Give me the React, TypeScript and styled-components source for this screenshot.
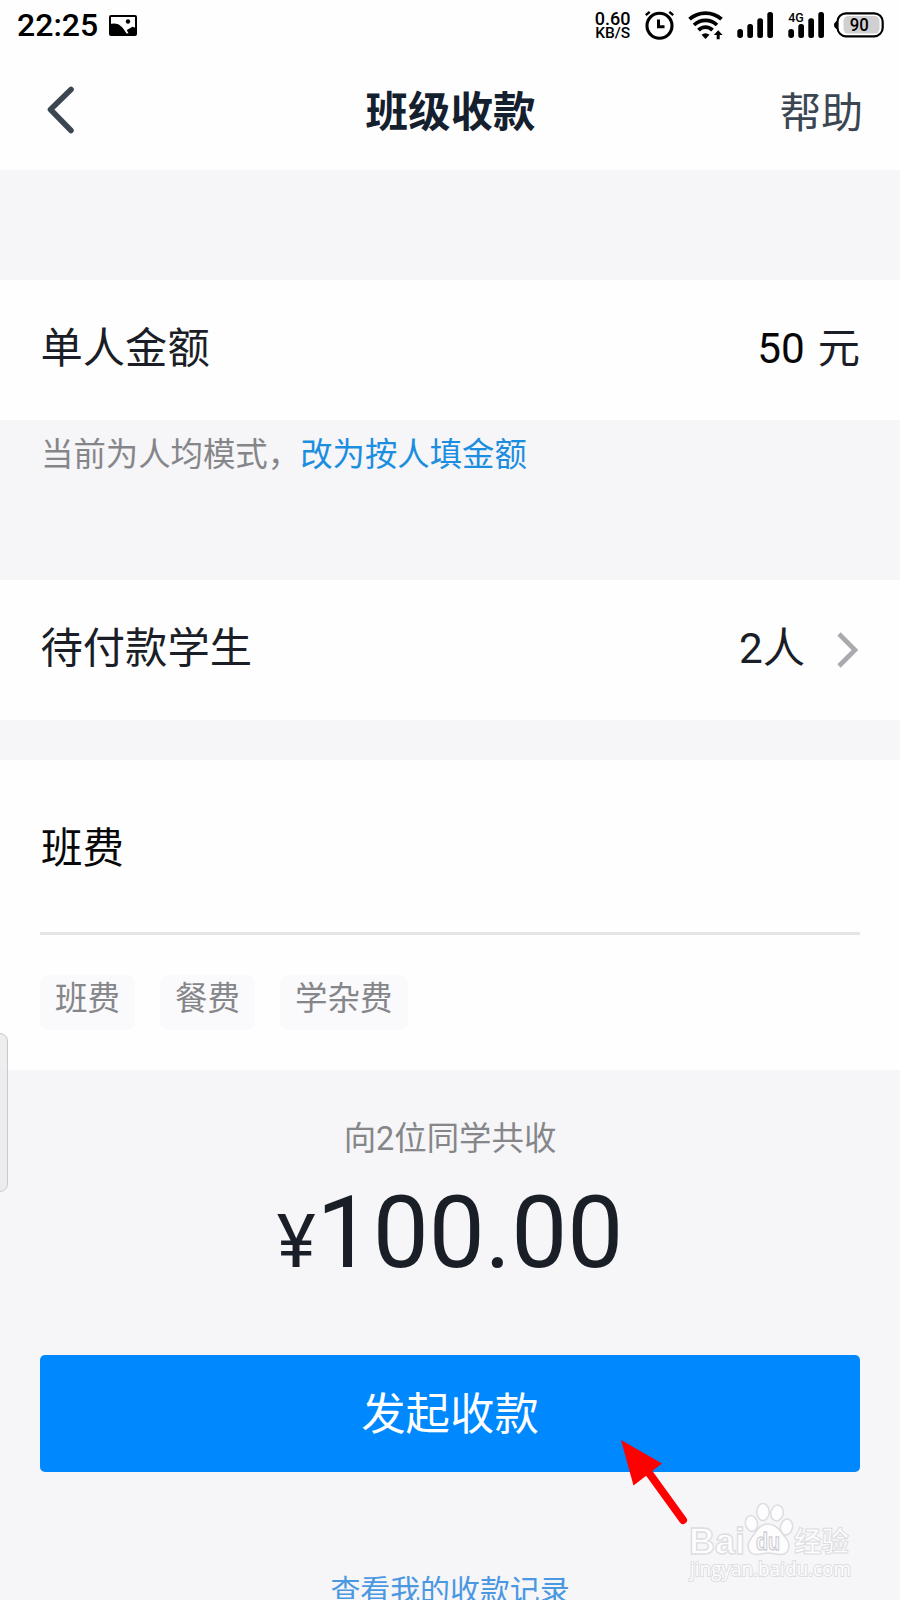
import React from "react";
import styled, { createGlobalStyle } from "styled-components";

const GlobalStyle = createGlobalStyle`
  * { box-sizing: border-box; }
  html, body { margin: 0; padding: 0; overflow: hidden; background: #f6f5f8; }
  body { font-family: Roboto, "Noto Sans CJK SC", sans-serif; }
  svg { display: block; flex: none; overflow: visible; }
`;

const Screen = styled.div`
  position: relative;
  display: flex;
  flex-direction: column;
  width: 900px;
  height: 1600px;
  overflow: hidden;
  background: #f6f5f8;
  color: #1b1e26;
`;

const Top = styled.header`
  flex: none;
  height: 170px;
  margin-bottom: 110px;
  background: #fefefe;
`;

const StatusBar = styled.div`
  display: flex;
  align-items: center;
  justify-content: space-between;
  height: 50px;
  padding: 0 16px 0 17px;
  color: #000;
`;

const StatusLeft = styled.div`
  display: flex;
  align-items: center;
  gap: 11px;
`;

const Clock = styled.span`
  font-size: 32px;
  font-weight: 500;
  line-height: 50px;
`;

const StatusIcons = styled.div`
  display: flex;
  align-items: center;
  gap: 14px;
`;

const Speed = styled.div`
  display: flex;
  flex-direction: column;
  align-items: center;
  padding-top: 2px;
  font-weight: 500;
`;

const SpeedLine = styled.span<{ $size: number }>`
  font-size: ${(p) => p.$size}px;
  line-height: 15px;
`;

const NavBar = styled.nav`
  display: grid;
  grid-template-columns: 1fr auto 1fr;
  align-items: center;
  height: 120px;
  padding: 4px 37px 0 38px;
`;

const Title = styled.h1`
  margin: 0;
  padding-top: 2px;
  font-size: 42.5px;
  font-weight: 700;
  line-height: 60px;
  color: #14202e;
`;

const Help = styled.span`
  justify-self: end;
  padding-top: 3px;
  font-size: 41.8px;
  line-height: 60px;
  color: #3b4652;
`;

const Row = styled.section`
  display: flex;
  flex: none;
  align-items: center;
  justify-content: space-between;
  height: 140px;
  padding: 0 41px 2px 40.5px;
  background: #fefefe;
  font-size: 42.3px;
  line-height: 60px;
`;

const Value = styled.div`
  display: flex;
  align-items: center;
`;

const Amount = styled.span`
  margin-right: 13px;
  color: #060608;
`;

const Unit = styled.span`
  margin-right: -1px;
`;

const People = styled.span`
  margin-right: 32px;
`;

const Hint = styled.p`
  flex: none;
  height: 160px;
  margin: 0;
  padding: 10px 41px;
  font-size: 32.4px;
  line-height: 50px;
  color: #858689;
`;

const HintLink = styled.span`
  color: #1b8ee0;
`;

const Purpose = styled.section`
  display: flex;
  flex: none;
  flex-direction: column;
  height: 310px;
  margin-top: 40px;
  padding: 0 40px;
  background: #fefefe;
`;

const PurposeInput = styled.div`
  height: 175px;
  padding: 59px 1px 0;
  border-bottom: 3px solid #e5e5e7;
  font-size: 41.5px;
  line-height: 60px;
  color: #08080a;
`;

const Chips = styled.div`
  display: flex;
  gap: 25px;
  margin-top: 40px;
`;

const Chip = styled.span`
  height: 55px;
  padding: 0 15px;
  border-radius: 8px;
  background: #faf9fc;
  font-size: 32.5px;
  line-height: 48px;
  color: #858689;
`;

const Summary = styled.section`
  display: flex;
  flex: none;
  flex-direction: column;
  align-items: center;
  height: 285px;
  padding-top: 44px;
`;

const SummaryLabel = styled.span`
  font-size: 32.4px;
  line-height: 50px;
  color: #858689;
`;

const Total = styled.div`
  display: flex;
  align-items: baseline;
  margin-top: 9px;
  line-height: 120px;
  color: #1a1f27;
`;

const Currency = styled.span`
  margin-right: 1px;
  font-size: 74px;
`;

const TotalNumber = styled.span`
  font-size: 99.8px;
`;

const Submit = styled.button`
  flex: none;
  height: 117px;
  margin: 0 40px;
  padding: 3px 0 0;
  border: 0;
  border-radius: 5px;
  background: #0088ff;
  font-family: inherit;
  font-size: 44.4px;
  line-height: 60px;
  color: #fff;
`;

const Records = styled.span`
  margin-top: 95px;
  text-align: center;
  font-size: 29.9px;
  line-height: 48px;
  color: #4a98e2;
`;

const SideHandle = styled.div`
  position: absolute;
  left: -8px;
  top: 1033px;
  width: 16px;
  height: 159px;
  border: 1px solid #c9c9cb;
  border-radius: 8px;
  background: rgba(232, 231, 234, 0.75);
`;

const Pointer = styled.svg`
  position: absolute;
  left: 615px;
  top: 1435px;
`;

const Watermark = styled.svg`
  position: absolute;
  left: 680px;
  top: 1495px;
`;

const PictureIcon = () => (
  <svg width="28" height="21" viewBox="0 0 28 21">
    <rect x="1" y="1" width="26" height="19" rx="1" fill="none" stroke="#000" strokeWidth="2" />
    <path d="M1 9C8 7 13 10 17.300 18.200L19.500 18.500L17.800 15L23.500 11.800L27 13V20H1Z" fill="#000" />
    <circle cx="19" cy="6.500" r="2.200" fill="#000" />
  </svg>
);

const AlarmIcon = () => (
  <svg width="29" height="29" viewBox="0 0 29 29" fill="none" stroke="#000">
    <circle cx="14.5" cy="14.8" r="12.5" strokeWidth="3.1" />
    <path d="M13.5 8.500V15.700H19.500" strokeWidth="3" />
    <path d="M.8 4.200L4.700 .8M28.200 4.200L24.300 .8" strokeWidth="2.4" />
  </svg>
);

const WifiIcon = () => (
  <svg width="35" height="29" viewBox="0 0 35 29" fill="none" stroke="#000">
    <path d="M1.5 8.200C10.500 .1 24.500 .1 33.500 8.200" strokeWidth="3.8" />
    <path d="M6 14C12.500 7.800 22.500 7.800 29 14" strokeWidth="3.8" />
    <path d="M10.500 19.200C14.500 15.200 20.500 15.200 24.500 19.200" strokeWidth="3.8" />
    <path d="M13.500 23.800Q17.500 20.500 21.500 23.800L17.500 28Z" fill="#000" stroke="none" />
    <path d="M30.200 19.200L34.600 24H31.700V28.200H28.700V24H25.800Z" fill="#000" stroke="none" />
  </svg>
);

const SignalIcon = ({ network }: { network?: string }) => (
  <svg width="37" height="28" viewBox="0 0 37 28">
    <g fill="#000">
      <rect x="0.3" y="18" width="5.7" height="9" rx="2.7" />
      <rect x="10.3" y="13" width="5.7" height="14" rx="2.5" />
      <rect x="20.3" y="7.3" width="5.7" height="19.7" rx="2.5" />
      <rect x="30.3" y="1" width="5.7" height="26" rx="2.5" />
    </g>
    {network && (
      <text x="0.3" y="10.6" fontSize="13.5" fontWeight="500" textLength="15.5" lengthAdjust="spacingAndGlyphs">
        {network}
      </text>
    )}
  </svg>
);

const BatterySvg = styled.svg`
  margin-left: -5px;
  margin-right: 0.5px;
`;

const BatteryIcon = () => (
  <BatterySvg width="50" height="26" viewBox="0 0 50 26">
    <path d="M4 8.500Q0 10 0 13Q0 16 4 17.500Z" fill="#000" />
    <rect x="3.5" y="1.3" width="45.2" height="23" rx="8.5" fill="#fff" stroke="#000" strokeWidth="2.2" />
    <rect x="9.5" y="4" width="36" height="17.6" rx="5" fill="#d0cfd2" />
    <text x="25.2" y="19.3" fontSize="18" fontWeight="500" textAnchor="middle" textLength="19" lengthAdjust="spacingAndGlyphs">
      90
    </text>
  </BatterySvg>
);

const BackSvg = styled.svg`
  margin: 0 0 5px 8px;
`;

const BackIcon = () => (
  <BackSvg width="30" height="50" viewBox="0 0 30 50">
    <path d="M25 4.500L4.500 24.500L25 45.500" fill="none" stroke="#3b4652" strokeWidth="5.6" strokeLinecap="round" strokeLinejoin="round" />
  </BackSvg>
);

const ChevronIcon = () => (
  <svg width="22" height="36" viewBox="0 0 22 36">
    <path d="M2 3L18 19L2 35" fill="none" stroke="#a9aaad" strokeWidth="4.6" />
  </svg>
);

const purposes = ["班费", "餐费", "学杂费"];

export default function App() {
  return (
    <Screen>
      <GlobalStyle />
      <Top>
        <StatusBar>
          <StatusLeft>
            <Clock>22:25</Clock>
            <PictureIcon />
          </StatusLeft>
          <StatusIcons>
            <Speed>
              <SpeedLine $size={18}>0.60</SpeedLine>
              <SpeedLine $size={15.5}>KB/S</SpeedLine>
            </Speed>
            <AlarmIcon />
            <WifiIcon />
            <SignalIcon />
            <SignalIcon network="4G" />
            <BatteryIcon />
          </StatusIcons>
        </StatusBar>
        <NavBar>
          <BackIcon />
          <Title>班级收款</Title>
          <Help>帮助</Help>
        </NavBar>
      </Top>

      <Row>
        <span>单人金额</span>
        <Value>
          <Amount>50</Amount>
          <Unit>元</Unit>
        </Value>
      </Row>
      <Hint>
        当前为人均模式，<HintLink>改为按人填金额</HintLink>
      </Hint>

      <Row>
        <span>待付款学生</span>
        <Value>
          <People>2人</People>
          <ChevronIcon />
        </Value>
      </Row>

      <Purpose>
        <PurposeInput>班费</PurposeInput>
        <Chips>
          {purposes.map((p) => (
            <Chip key={p}>{p}</Chip>
          ))}
        </Chips>
      </Purpose>

      <Summary>
        <SummaryLabel>向2位同学共收</SummaryLabel>
        <Total>
          <Currency>¥</Currency>
          <TotalNumber>100.00</TotalNumber>
        </Total>
      </Summary>

      <Submit>发起收款</Submit>
      <Records>查看我的收款记录</Records>

      <SideHandle />
      <Watermark width="190" height="95" viewBox="0 0 190 95">
        <g fill="#fdfdfe" stroke="#dddce0" strokeWidth="1.5">
          <ellipse cx="71.5" cy="28.5" rx="6" ry="8" transform="rotate(-12 71.5 28.5)" />
          <ellipse cx="83" cy="17" rx="6.2" ry="8.5" />
          <ellipse cx="97" cy="18" rx="6.2" ry="8" transform="rotate(12 97 18)" />
          <ellipse cx="106.5" cy="32" rx="6" ry="8" transform="rotate(12 106.5 32)" />
          <path d="M88 29C97 29 101 37 105 42C112 50 109 60 100 59.500C95 59 93 58 88 58C83 58 81 60 76 59.500C67 59 66 49 72 42C76 37 79 29 88 29Z" />
        </g>
        <g fill="#fdfdfe" stroke="#dddce0" strokeWidth="1.3" fontFamily='"Liberation Sans", sans-serif'>
          <text x="9" y="58.5" fontSize="37" fontWeight="700" textLength="56" lengthAdjust="spacingAndGlyphs">Bai</text>
          <text x="76" y="55" fontSize="23" stroke="#d2d1d6" fontWeight="700" textLength="24" lengthAdjust="spacingAndGlyphs">du</text>
          <text x="114" y="56.5" fontSize="28" strokeWidth="1" fontWeight="700" fontFamily='"Noto Sans CJK SC", sans-serif' textLength="55" lengthAdjust="spacingAndGlyphs">经验</text>
          <text x="10" y="80.500" fontSize="20" strokeWidth="2" paintOrder="stroke" fontFamily='"Open Sans", sans-serif' textLength="161" lengthAdjust="spacingAndGlyphs">jingyan.baidu.com</text>
        </g>
      </Watermark>
      <Pointer width="75" height="95" viewBox="0 0 75 95">
        <path d="M34 38L68 85" stroke="#fe0000" strokeWidth="8" strokeLinecap="round" />
        <path d="M6 5L47 28.500L18.500 50.500Z" fill="#fe0000" />
      </Pointer>
    </Screen>
  );
}
